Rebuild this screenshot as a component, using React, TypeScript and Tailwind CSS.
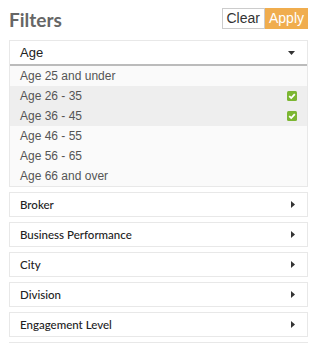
const AGES = [
  { label: 'Age 25 and under', checked: false },
  { label: 'Age 26 - 35', checked: true },
  { label: 'Age 36 - 45', checked: true },
  { label: 'Age 46 - 55', checked: false },
  { label: 'Age 56 - 65', checked: false },
  { label: 'Age 66 and over', checked: false },
]

const GROUPS = ['Broker', 'Business Performance', 'City', 'Division', 'Engagement Level']

function Check() {
  return (
    <svg width="10" height="10" viewBox="0 0 10 10">
      <rect width="10" height="10" rx="1.5" fill="#7cb632" />
      <path d="M2.2 5.2 L4.2 7 L7.8 3.2" stroke="#fff" strokeWidth="1.8" fill="none" />
    </svg>
  )
}

function CaretDown() {
  return (
    <svg width="7" height="4" viewBox="0 0 7 4">
      <path d="M0 0 H7 L3.5 4 Z" fill="#333" />
    </svg>
  )
}

function CaretRight() {
  return (
    <svg width="4" height="7" viewBox="0 0 4 7">
      <path d="M0 0 L4 3.5 L0 7 Z" fill="#333" />
    </svg>
  )
}

export default function App() {
  return (
    <div className="h-[343px] w-[318px] overflow-hidden bg-white pl-[9px] pr-[10px] pt-[8px]">
      {/* Title + actions */}
      <div className="flex items-start justify-between">
        <h1 className="font-['Lato',sans-serif] text-[19px] font-bold leading-[24px] text-[#666]">Filters</h1>
        <div className="flex font-['Liberation_Sans',Arial,sans-serif] text-[14px]">
          <button className="h-[21px] border border-[#ccc] bg-white px-[4px] leading-[19px] text-[#333]">Clear</button>
          <button className="h-[21px] bg-[#f0ad4e] px-[4px] leading-[21px] text-white">Apply</button>
        </div>
      </div>

      {/* Open group */}
      <div className="mt-[8px] border border-[#e8e8e8]">
        <div className="flex h-[25px] items-center justify-between border-b-2 border-[#bbb] pl-[10px] pr-[12px]">
          <span className="font-['Liberation_Sans',Arial,sans-serif] text-[13px] text-[#222]">Age</span>
          <CaretDown />
        </div>
        <ul className="font-['Liberation_Sans',Arial,sans-serif] text-[12px] text-[#555]">
          {AGES.map((a) => (
            <li
              key={a.label}
              className={`flex h-[20px] items-center justify-between pl-[10px] pr-[10px] ${
                a.checked ? 'bg-[#eeeeee]' : 'bg-[#fafafa]'
              }`}
            >
              <span>{a.label}</span>
              {a.checked && <Check />}
            </li>
          ))}
        </ul>
      </div>

      {/* Collapsed groups */}
      <div className="mt-[5px] flex flex-col gap-[5px]">
        {GROUPS.map((g) => (
          <div
            key={g}
            className="flex h-[25px] items-center justify-between border border-[#e8e8e8] pl-[10px] pr-[12px]"
          >
            <span className="font-['Lato',sans-serif] text-[11.5px] font-medium text-[#222]">{g}</span>
            <CaretRight />
          </div>
        ))}
        <div className="h-[25px] border border-[#e8e8e8]" />
      </div>
    </div>
  )
}
